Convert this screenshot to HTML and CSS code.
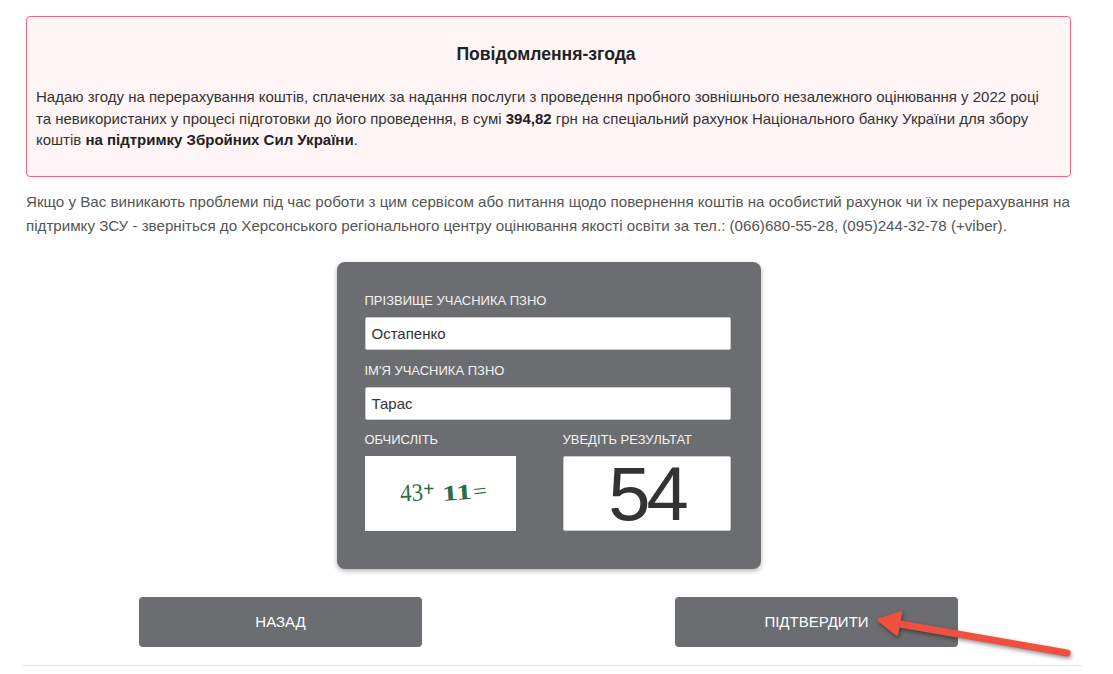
FILE: index.html
```html
<!DOCTYPE html>
<html lang="uk">
<head>
<meta charset="utf-8">
<title>Повідомлення-згода</title>
<link rel="stylesheet" href="styles.css">
</head>
<body>
<div class="page">
  <div class="alert">
    <h3 class="alert-title">Повідомлення-згода</h3>
    <p class="alert-text">Надаю згоду на перерахування коштів, сплачених за надання послуги з проведення пробного зовнішнього незалежного оцінювання у 2022 році та невикористаних у процесі підготовки до його проведення, в сумі <b>394,82</b> грн на спеціальний рахунок Національного банку України для збору коштів <b>на підтримку Збройних Сил України</b>.</p>
  </div>
  <p class="info">Якщо у Вас виникають проблеми під час роботи з цим сервісом або питання щодо повернення коштів на особистий рахунок чи їх перерахування на підтримку ЗСУ - зверніться до Херсонського регіонального центру оцінювання якості освіти за тел.: (066)680-55-28, (095)244-32-78 (+viber).</p>

  <form class="card">
    <label class="field-label">Прізвище учасника ПЗНО</label>
    <div class="input">Остапенко</div>
    <label class="field-label second">Ім'я учасника ПЗНО</label>
    <div class="input">Тарас</div>
    <div class="captcha-row">
      <div class="captcha-col">
        <label class="field-label">Обчисліть</label>
        <svg class="captcha" width="151" height="75" viewBox="0 0 151 75">
          <rect width="151" height="75" fill="#fff"/>
          <g fill="#2d6e3f" font-family="Liberation Serif, serif">
            <text x="35" y="45" font-size="25" textLength="23" lengthAdjust="spacingAndGlyphs" transform="rotate(-3 46 37)">43</text>
            <text x="58" y="40" font-size="20" font-weight="bold">+</text>
            <text x="77" y="44" font-size="22" font-weight="bold" textLength="30" lengthAdjust="spacingAndGlyphs" transform="rotate(-4 92 37)">11</text>
            <text x="108" y="42" font-size="21" textLength="14" lengthAdjust="spacingAndGlyphs" transform="rotate(-7 115 36)">=</text>
          </g>
        </svg>
      </div>
      <div class="captcha-col">
        <label class="field-label">Уведіть результат</label>
        <div class="result">54</div>
      </div>
    </div>
  </form>

  <div class="actions">
    <button type="button" class="btn">Назад</button>
    <button type="button" class="btn">Підтвердити</button>
  </div>
  <hr class="divider">
</div>
<svg class="arrow" width="215" height="65" viewBox="0 0 215 65">
  <line x1="197" y1="53" x2="24" y2="23" stroke="#ef5040" stroke-width="7" stroke-linecap="round"/>
  <polygon points="9,20 30.6,12.7 26.8,34.3" fill="#ef5040" stroke="#ef5040" stroke-width="3" stroke-linejoin="round"/>
</svg>
</body>
</html>
```

FILE: styles.css
```css
html, body {
  margin: 0;
  padding: 0;
  background: #fff;
}
body {
  font-family: "Liberation Sans", Arial, sans-serif;
  color: #333;
  width: 1113px;
  height: 674px;
  overflow: hidden;
}
.page {
  width: 1045px;
  margin-left: 26px;
  padding-top: 16px;
}
.alert {
  border: 1px solid #f0677a;
  background: #fff5f7;
  border-radius: 4px;
  padding: 27px 14px 25px 9px;
}
.alert-title {
  margin: 0;
  text-align: center;
  font-size: 17.6px;
  line-height: 20px;
  font-weight: bold;
  color: #222;
}
.alert-text {
  margin: 22px 0 0;
  font-size: 15px;
  line-height: 21.5px;
  color: #333;
}
.alert-text b {
  color: #222;
}
.info {
  margin: 13px 0 0;
  font-size: 15.15px;
  line-height: 24px;
  color: #555;
}
.card {
  width: 366px;
  margin: 24px auto 0;
  background: #6c6d71;
  border-radius: 8px;
  padding: 31px 30px 38px 28px;
  box-shadow: 0 2px 5px rgba(0, 0, 0, 0.3);
  display: flex;
  flex-direction: column;
}
.field-label {
  display: block;
  font-size: 13px;
  line-height: 16px;
  color: #f2f2f2;
  text-transform: uppercase;
  letter-spacing: 0;
  margin-bottom: 8px;
}
.field-label.second {
  margin-top: 13px;
}
.input {
  width: 352px;
  height: 31px;
  background: #fff;
  border: 1px solid #ccc;
  border-radius: 2px;
  padding: 0 6px;
  font-size: 15px;
  line-height: 31px;
  color: #333;
}
.captcha-row {
  margin-top: 12px;
  display: grid;
  grid-template-columns: 168px 168px;
  column-gap: 30px;
}
.captcha {
  display: block;
}
.result {
  height: 73px;
  margin-top: 1px;
  background: #fff;
  border: 1px solid #ccc;
  border-radius: 2px;
  text-align: center;
  font-size: 76px;
  line-height: 74px;
  letter-spacing: -4px;
  color: #333;
}
.actions {
  margin-top: 28px;
  display: flex;
  justify-content: center;
  gap: 253px;
}
.btn {
  width: 283px;
  height: 50px;
  border: none;
  border-radius: 4px;
  background: #6c6d71;
  color: #fff;
  font-family: "Liberation Sans", Arial, sans-serif;
  font-size: 15px;
  text-transform: uppercase;
  cursor: pointer;
}
.divider {
  margin: 18px -11px 0 -3px;
  border: none;
  border-top: 1px solid #e3e3e3;
}
.arrow {
  position: absolute;
  left: 870px;
  top: 600px;
  filter: drop-shadow(1px 2px 2px rgba(0, 0, 0, 0.45));
}
```
